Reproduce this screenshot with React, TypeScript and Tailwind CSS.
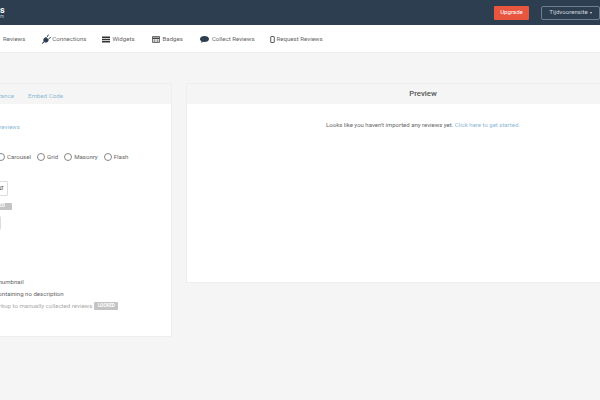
import React from 'react';

const NAV_TEXT = 'text-[#666] text-[6.1px] leading-none';

const Radio = ({ label }: { label: string }) => (
  <div className="flex items-center gap-[2px]">
    <span className="w-[8px] h-[8px] rounded-full border border-[#888] bg-white" />
    <span className="text-[6.1px] leading-none text-[#666]">{label}</span>
  </div>
);

const Locked = ({ className }: { className: string }) => (
  <span className={`bg-[#c4c4c4] rounded-[1px] text-white font-bold text-[4.5px] leading-none flex items-center justify-center ${className}`}>
    LOCKED
  </span>
);

const App: React.FC = () => {
  return (
    <div className="w-[600px] h-[400px] overflow-hidden bg-[#f5f5f5] font-['Roboto',sans-serif]">
      <header className="h-[25px] bg-[#2c3e50] flex items-center">
        <div className="w-[20px] flex flex-col text-white">
          <span className="font-bold text-[9px] leading-[8px]">s</span>
          <span className="text-[4.5px] leading-[5px] text-[#c5ccd3]">m</span>
        </div>
        <div className="ml-auto flex items-center">
          <button className="w-[35px] h-[14px] bg-[#e8563f] rounded-[1px] text-white text-[6.1px] leading-none">Upgrade</button>
          <button className="ml-[12px] w-[59px] h-[14px] border border-[#6d7f91] rounded-[2px] text-[#cfd6dc] text-[6.1px] leading-none flex items-center justify-center gap-[2px]">
            Tijdvoorensite
            <span className="border-x-[1.5px] border-t-[2px] border-x-transparent border-t-[#d5dbe0]" />
          </button>
        </div>
      </header>

      <nav className="h-[28px] bg-white border-b border-[#eee] flex items-center pl-[3px] pt-[1px]">
        <span className={NAV_TEXT}>Reviews</span>
        <svg className="w-[10px] h-[10px] ml-[16px] text-[#2c3e50]" viewBox="0 0 24 24" fill="currentColor">
          <path d="M2 23l5-6-2-2 2-5 5-3 7 7-3 5-5 2-2-2-6 5zM14 6l3-5 2 1-3 5zM18 10l5-3 1 2-5 3z" />
        </svg>
        <span className={`${NAV_TEXT} ml-[1px]`}>Connections</span>
        <svg className="w-[8px] h-[7px] ml-[16px] text-[#333]" viewBox="0 0 16 14" fill="currentColor">
          <path d="M0 1h16v3H0zM0 5.500h16v3H0zM0 10h16v3H0z" />
        </svg>
        <span className={`${NAV_TEXT} ml-[2px]`}>Widgets</span>
        <svg className="w-[8px] h-[7px] ml-[17px] text-[#444]" viewBox="0 0 16 14" fill="none" stroke="currentColor" strokeWidth="1.5">
          <path d="M1 1h14v12H1z" />
          <path d="M1 4.500h14" strokeWidth="3" />
          <path d="M3 8h4M3 10.500h4M9 8h4M9 10.500h4" />
        </svg>
        <span className={`${NAV_TEXT} ml-[3px]`}>Badges</span>
        <svg className="w-[9px] h-[7px] ml-[17px] text-[#2c3e50]" viewBox="0 0 18 14" fill="currentColor">
          <path d="M9 0c5 0 9 2.500 9 6s-4 6-9 6c-1 0-2 0-3-.3L2 14l1-3.500C1 9.500 0 8 0 6c0-3.500 4-6 9-6z" />
        </svg>
        <span className={`${NAV_TEXT} ml-[3px]`}>Collect Reviews</span>
        <svg className="w-[5px] h-[7px] ml-[15px] text-[#444]" viewBox="0 0 10 14" fill="none" stroke="currentColor" strokeWidth="1.8">
          <rect x="1.500" y="1" width="7" height="12" rx="1" />
        </svg>
        <span className={`${NAV_TEXT} ml-[2px]`}>Request Reviews</span>
      </nav>

      <main className="flex items-start mt-[30px] -ml-[20px] gap-[14px]">
        <section className="w-[192px] h-[254px] shrink-0 bg-white border border-[#eee] rounded-[1px] flex flex-col">
          <div className="h-[20px] shrink-0 bg-[#f5f5f5] flex items-center pt-[4px] text-[6.2px] leading-none text-[#8dbad4]">
            <span>Appearance</span>
            <span className="ml-[14px]">Embed Code</span>
          </div>
          <div className="flex-1 text-[6.1px] leading-none text-[#666]">
            <p className="mt-[20px] text-[#8dbad4]">Select reviews</p>
            <div className="mt-[23px] ml-[16px] flex items-center gap-[6px]">
              <Radio label="Carousel" />
              <Radio label="Grid" />
              <Radio label="Masonry" />
              <Radio label="Flash" />
            </div>
            <div className="mt-[20px] w-[27px] h-[15px] bg-white border border-[#ddd] rounded-[1px] flex items-center justify-end pr-[3px] text-[5.5px] text-[#555]">
              ⇵
            </div>
            <Locked className="mt-[7px] w-[31px] h-[7px]" />
            <div className="mt-[6px] w-[20px] h-[14px] bg-white border border-[#ddd] rounded-[1px]" />
            <p className="mt-[49px] -ml-[20px]">Show review thumbnail</p>
            <p className="mt-[5.9px] -ml-[22px]">Hide reviews containing no description</p>
            <div className="mt-[4.9px] -ml-[26px] flex items-center gap-[2px] text-[#aaa]">
              <span className="whitespace-nowrap">Add schema markup to manually collected reviews</span>
              <Locked className="w-[24px] h-[8px]" />
            </div>
          </div>
        </section>

        <section className="w-[474px] h-[200px] shrink-0 bg-white border border-[#eee] rounded-[1px] flex flex-col">
          <div className="h-[20px] shrink-0 bg-[#f5f5f5] flex items-center justify-center pb-[1px] text-[7.8px] font-medium leading-none text-[#555]">
            Preview
          </div>
          <p className="mt-[18px] text-center text-[6px] leading-none text-[#666]">
            Looks like you haven't imported any reviews yet. <span className="text-[#8dbad4]">Click here to get started.</span>
          </p>
        </section>
      </main>
    </div>
  );
};

export default App;
